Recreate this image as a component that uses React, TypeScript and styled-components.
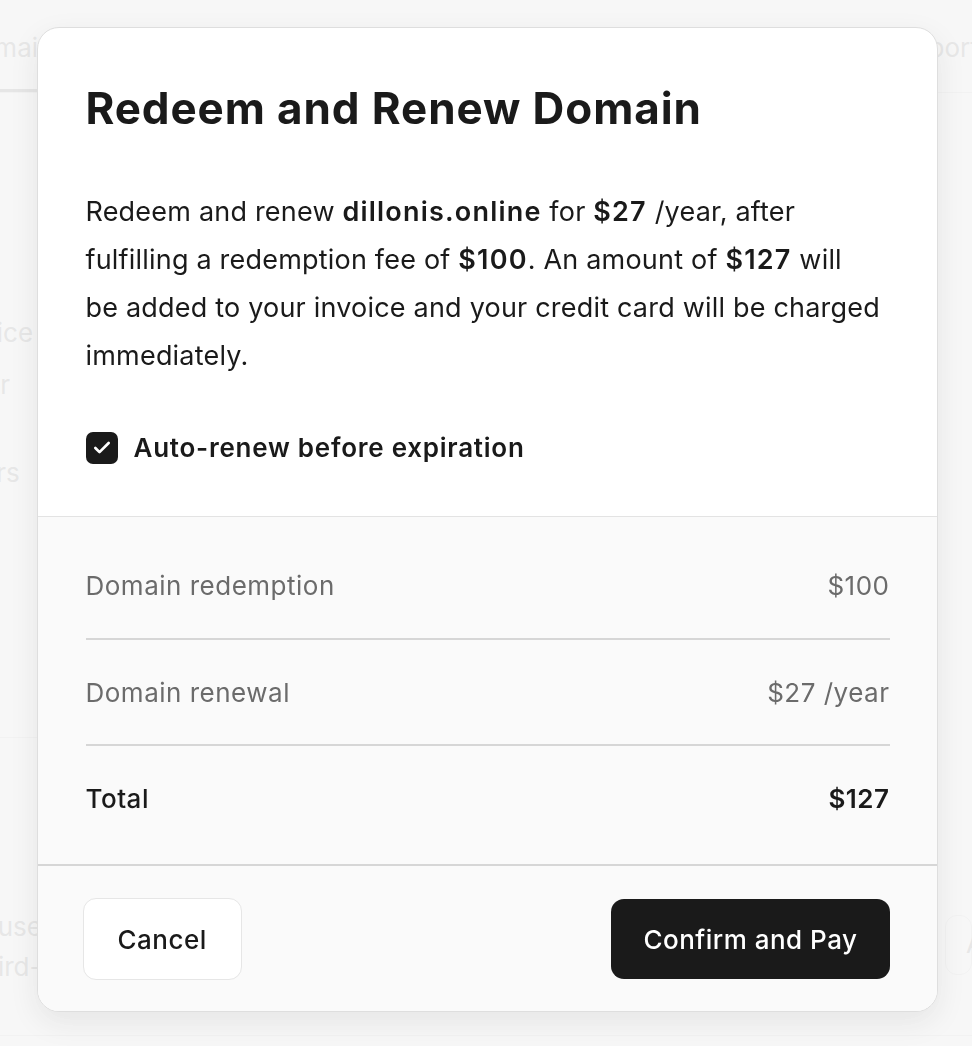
import React from 'react'
import styled, { createGlobalStyle } from 'styled-components'
import { Check } from 'lucide-react'

const GlobalStyle = createGlobalStyle`
  html, body {
    margin: 0;
    padding: 0;
    background: #ffffff;
    font-family: Inter, "Noto Sans", "Liberation Sans", sans-serif;
    color: #1a1a1a;
    overflow: hidden;
  }
  * { box-sizing: border-box; }
`

// 背景のページ(モーダルの後ろ)
const Page = styled.div`
  width: 972px;
  height: 1046px;
  overflow: hidden;
  color: #c4c4c4;
  font-size: 26px;
  white-space: nowrap;
`

const Shifted = styled.div`
  margin-left: -32px;
  width: 1004px;
  height: 1036px;
  border-bottom: 1px solid #ececec;
`

const TabStrip = styled.div`
  display: flex;
  height: 93px;
  border-bottom: 1px solid #ececec;
`

const Tab = styled.div<{ active?: boolean; grow?: boolean; shift?: number }>`
  flex: ${p => (p.grow ? '1' : '0 0 auto')};
  width: ${p => (p.grow ? 'auto' : p.active ? '130px' : '75px')};
  padding-top: 32px;
  text-indent: ${p => p.shift || 0}px;
  border-bottom: ${p => (p.active ? '3px solid #c2c2c2' : '3px solid transparent')};
`

const PageBody = styled.div`
  display: grid;
  grid-template-columns: 101px 1fr 75px;
`

const LeftCol = styled.div`
  display: flex;
  flex-direction: column;
`

const BigNumber = styled.div`
  font-size: 64px;
  font-weight: 600;
  margin-top: 102px;
  margin-left: -8px;
  line-height: 80px;
`

const SideText = styled.div<{ gap: number; shift?: number }>`
  margin-top: ${p => p.gap}px;
  margin-left: ${p => p.shift || 0}px;
  line-height: 40px;
`

const Section = styled.div`
  border-top: 1px solid #ececec;
  margin-top: 244px;
  width: 100%;
  padding-top: 169px;
`

const GhostButton = styled.div`
  margin: 822px 0 0 48px;
  height: 60px;
  border: 1px solid #ececec;
  border-radius: 12px;
  padding: 12px 0 0 20px;
`

const Overlay = styled.div`
  position: fixed;
  inset: 0;
  background: rgba(244, 244, 244, 0.72);
  display: flex;
  justify-content: center;
  align-items: flex-start;
  padding: 27px 0 0 2px;
`

const Modal = styled.div`
  width: 901px;
  background: #ffffff;
  border: 1px solid #dedede;
  border-radius: 22px;
  overflow: hidden;
  box-shadow: 0 10px 30px rgba(0, 0, 0, 0.08);
`

const Header = styled.div`
  padding: 54px 47px 52px 48px;
`

const Title = styled.h1`
  margin: 0;
  font-size: 44px;
  line-height: 52px;
  font-weight: 700;
  letter-spacing: 0.9px;
`

const Message = styled.p`
  margin: 54px 0 0;
  font-size: 27px;
  line-height: 48px;
  font-weight: 400;
  letter-spacing: 0.2px;
  b {
    font-weight: 600;
    letter-spacing: 1.2px;
  }
`

const CheckRow = styled.label`
  margin-top: 52px;
  display: flex;
  align-items: center;
  gap: 16px;
  font-size: 26px;
  font-weight: 600;
  letter-spacing: 0.75px;
  line-height: 32px;
`

const CheckBox = styled.span`
  width: 32px;
  height: 32px;
  border-radius: 7px;
  background: #1a1a1a;
  color: #ffffff;
  display: flex;
  align-items: center;
  justify-content: center;
`

const Summary = styled.div`
  background: #fafafa;
  border-top: 1px solid #e3e3e3;
  border-bottom: 2px solid #d6d6d6;
  padding: 15px 47px 14px 48px;
`

const Row = styled.div<{ total?: boolean }>`
  height: 106px;
  display: flex;
  align-items: center;
  justify-content: space-between;
  font-size: 26px;
  letter-spacing: 0.5px;
  color: ${p => (p.total ? '#1a1a1a' : '#6b6b6b')};
  font-weight: ${p => (p.total ? 500 : 400)};
  & + & {
    border-top: 2px solid #d6d6d6;
  }
`

const Amount = styled.span<{ strong?: boolean }>`
  font-weight: ${p => (p.strong ? 600 : 400)};
`

const Footer = styled.div`
  background: #fafafa;
  padding: 32px 47px 31px 45px;
  display: flex;
  align-items: center;
  justify-content: space-between;
`

const Button = styled.button<{ primary?: boolean }>`
  font-family: inherit;
  font-size: 26px;
  font-weight: 500;
  letter-spacing: 0.5px;
  border-radius: 13px;
  cursor: pointer;
  ${p =>
    p.primary
      ? `
  height: 80px;
  padding: 0 32px;
  background: #1a1a1a;
  color: #ffffff;
  border: none;
  `
      : `
  height: 82px;
  padding: 0 34px;
  background: #ffffff;
  color: #1a1a1a;
  border: 1.5px solid #e6e6e6;
  `}
`

const App = () => {
  return (
    <>
      <GlobalStyle />
      <Page>
        <Shifted>
          <TabStrip>
            <Tab active shift={-8}>Domains</Tab>
            <Tab grow />
            <Tab>Reports</Tab>
          </TabStrip>
          <PageBody>
            <LeftCol>
              <BigNumber>0</BigNumber>
              <SideText gap={38} shift={2}>Price</SideText>
              <SideText gap={12} shift={-6}>Tier</SideText>
              <SideText gap={48} shift={-20}>Users</SideText>
              <Section>
                <SideText gap={0} shift={-8}>To use</SideText>
                <SideText gap={0} shift={6}>third-party</SideText>
              </Section>
            </LeftCol>
            <div />
            <div>
              <GhostButton>Add</GhostButton>
            </div>
          </PageBody>
        </Shifted>
      </Page>
      <Overlay>
        <Modal>
          <Header>
            <Title>Redeem and Renew Domain</Title>
            <Message>
              Redeem and renew <b>dillonis.online</b> for <b>$27</b> /year, after
              <br />
              fulfilling a redemption fee of <b>$100</b>. An amount of <b>$127</b> will
              <br />
              be added to your invoice and your credit card will be charged
              <br />
              immediately.
            </Message>
            <CheckRow>
              <CheckBox>
                <Check size={20} strokeWidth={3.2} />
              </CheckBox>
              Auto-renew before expiration
            </CheckRow>
          </Header>
          <Summary>
            <Row>
              <span>Domain redemption</span>
              <Amount>$100</Amount>
            </Row>
            <Row>
              <span>Domain renewal</span>
              <Amount>$27 /year</Amount>
            </Row>
            <Row total>
              <span>Total</span>
              <Amount strong>$127</Amount>
            </Row>
          </Summary>
          <Footer>
            <Button>Cancel</Button>
            <Button primary>Confirm and Pay</Button>
          </Footer>
        </Modal>
      </Overlay>
    </>
  )
}

export default App
